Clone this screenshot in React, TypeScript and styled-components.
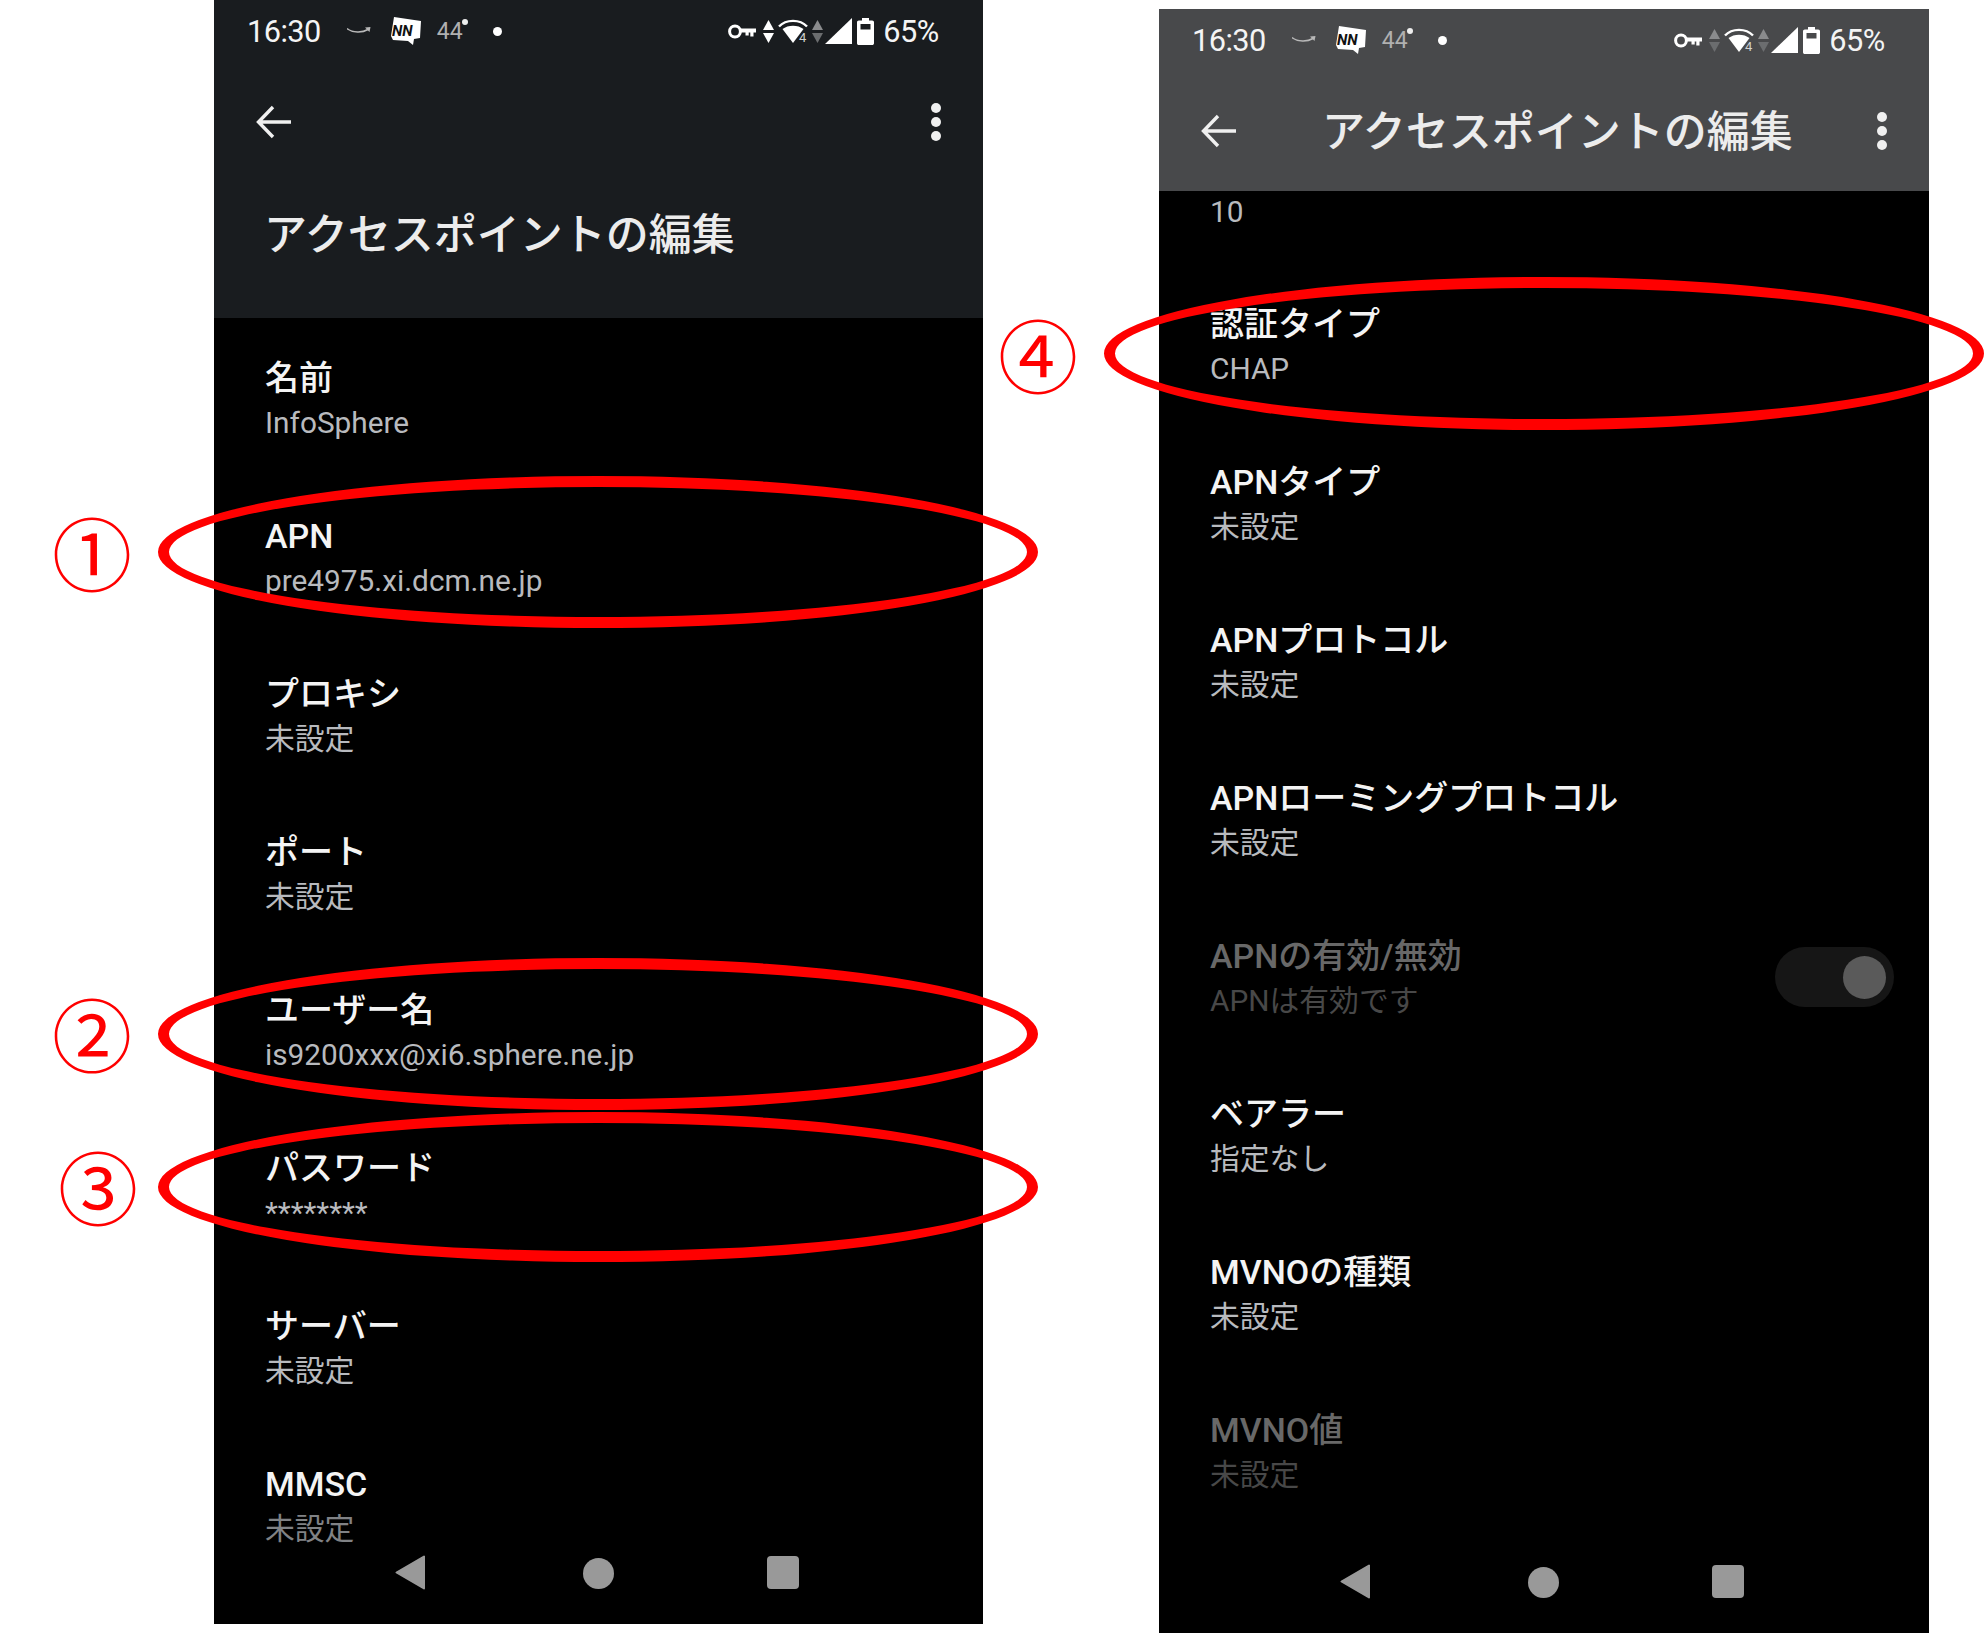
import React from 'react';
import styled, { createGlobalStyle } from 'styled-components';

const FONT = `Roboto, "Noto Sans CJK JP", sans-serif`;
const WHITE = '#f4f4f4';

type Item = { title: string; sub: string; disabled?: boolean; faded?: boolean };

const leftItems: Item[] = [
  { title: '名前', sub: 'InfoSphere' },
  { title: 'APN', sub: 'pre4975.xi.dcm.ne.jp' },
  { title: 'プロキシ', sub: '未設定' },
  { title: 'ポート', sub: '未設定' },
  { title: 'ユーザー名', sub: 'is9200xxx@xi6.sphere.ne.jp' },
  { title: 'パスワード', sub: '********' },
  { title: 'サーバー', sub: '未設定' },
  { title: 'MMSC', sub: '未設定', faded: true },
];

const rightItems: Item[] = [
  { title: '認証タイプ', sub: 'CHAP' },
  { title: 'APNタイプ', sub: '未設定' },
  { title: 'APNプロトコル', sub: '未設定' },
  { title: 'APNローミングプロトコル', sub: '未設定' },
  { title: 'APNの有効/無効', sub: 'APNは有効です', disabled: true },
  { title: 'ベアラー', sub: '指定なし' },
  { title: 'MVNOの種類', sub: '未設定' },
  { title: 'MVNO値', sub: '未設定', disabled: true },
];

function KeyIcon() {
  return (
    <svg width="28" height="15" viewBox="0 0 28 15">
      <circle cx="7" cy="7.5" r="5.4" fill="none" stroke="#fff" strokeWidth="3" />
      <path d="M12 4.4h16v4.2h-2.5v4h-3.2v-4h-1.6v3h-3.2v-3H12z" fill="#fff" />
    </svg>
  );
}

function UpDown({ dim }: { dim?: boolean }) {
  const fill = dim ? '#6b6d6f' : '#fff';
  return (
    <svg width="11" height="23" viewBox="0 0 11 23">
      <path d="M5.5 0L11 10H0z" fill={dim ? '#8a8b8d' : fill} />
      <path d="M5.5 23L0 13h11z" fill={fill} />
    </svg>
  );
}

function WifiIcon() {
  return (
    <svg width="30" height="26" viewBox="0 0 30 26">
      <path d="M1 8.5C8 1 22 1 29 8.5" fill="none" stroke="#fff" strokeWidth="2.4" />
      <path d="M4.5 11C10 6.5 20 6.5 25.5 11L15 25z" fill="#fff" />
      <text x="21" y="24" fontSize="13" fontFamily="Roboto, sans-serif" fill="#d0d0d0">
        4
      </text>
    </svg>
  );
}

function SignalIcon() {
  return (
    <svg width="27" height="26" viewBox="0 0 27 26">
      <path d="M27 0v26H0z" fill="#fff" />
    </svg>
  );
}

function BatteryIcon() {
  return (
    <svg width="17" height="27" viewBox="0 0 17 27">
      <path
        d="M5 0h7v2.5h3.2c1 0 1.8.8 1.8 1.8v20.9c0 1-.8 1.8-1.8 1.8H1.8c-1 0-1.8-.8-1.8-1.8V4.3c0-1 .8-1.8 1.8-1.8H5zM3.5 6v5.5h10V6z"
        fill="#fff"
        fillRule="evenodd"
      />
    </svg>
  );
}

function SmileIcon() {
  return (
    <svg width="24" height="10" viewBox="0 0 24 10">
      <path d="M0 2.5C6 7 15 7 21 3.5" fill="none" stroke="#b9b9b9" strokeWidth="1.5" />
      <path d="M18 1.5L23.5 1 22.5 6z" fill="#b9b9b9" />
    </svg>
  );
}

function NewsIcon() {
  return (
    <svg width="30" height="28" viewBox="0 0 30 28">
      <path d="M3 0l27 4-1 17-6 1-1 6-5-4-15-1-2-4z" fill="#fff" />
      <text
        x="1"
        y="19"
        fontSize="15"
        fontWeight="700"
        fontStyle="italic"
        fontFamily="Roboto, sans-serif"
        fill="#111"
      >
        NN
      </text>
    </svg>
  );
}

function BackArrow() {
  return (
    <svg width="36" height="34" viewBox="0 0 36 34">
      <path
        d="M35 17H3M17 2L2.5 17 17 32"
        fill="none"
        stroke="#f0f0f0"
        strokeWidth="3.4"
      />
    </svg>
  );
}

function StatusBar({ dimArrows }: { dimArrows?: boolean }) {
  return (
    <StatusRow>
      <Clock>16:30</Clock>
      <SmileIcon />
      <NewsIcon />
      <Temperature>44</Temperature>
      <StatusDot />
      <StatusRight>
        <KeyIcon />
        <UpDown dim={dimArrows} />
        <WifiIcon />
        <UpDown dim />
        <SignalIcon />
        <BatteryIcon />
        <Percent>65%</Percent>
      </StatusRight>
    </StatusRow>
  );
}

function Row({ item, toggle }: { item: Item; toggle?: boolean }) {
  return (
    <RowBox>
      <div>
        <RowTitle $disabled={item.disabled}>{item.title}</RowTitle>
        <RowSub $disabled={item.disabled} $faded={item.faded}>
          {item.sub}
        </RowSub>
      </div>
      {toggle && (
        <Track>
          <Thumb />
        </Track>
      )}
    </RowBox>
  );
}

function NavBar() {
  return (
    <Nav>
      <svg width="30" height="35" viewBox="0 0 30 35">
        <path d="M29 1.5v32L1.5 17.5z" fill="#999" stroke="#999" strokeWidth="2" strokeLinejoin="round" />
      </svg>
      <NavCircle />
      <NavSquare />
    </Nav>
  );
}

const ovals = [
  { left: 158, top: 476, width: 880, height: 152 },
  { left: 158, top: 958, width: 880, height: 152 },
  { left: 158, top: 1112, width: 880, height: 150 },
  { left: 1104, top: 277, width: 880, height: 153 },
];

const marks = [
  { left: 52, top: 497, text: '①' },
  { left: 52, top: 978, text: '②' },
  { left: 58, top: 1131, text: '③' },
  { left: 998, top: 299, text: '④' },
];

export default function App() {
  return (
    <>
      <GlobalStyle />
      <Page>
        <Phone $width={769} $top={0}>
          <Header $bg="#191c1f">
            <StatusBar />
            <Toolbar $height={120}>
              <BackArrow />
              <Dots>
                <Dot />
                <Dot />
                <Dot />
              </Dots>
            </Toolbar>
            <LargeTitle>アクセスポイントの編集</LargeTitle>
          </Header>
          <List>
            {leftItems.map((item) => (
              <Row key={item.title} item={item} />
            ))}
          </List>
          <NavBar />
        </Phone>

        <Phone $width={770} $top={9}>
          <Header $bg="#48494b">
            <StatusBar dimArrows />
            <Toolbar $height={120}>
              <BackArrow />
              <ToolbarTitle>アクセスポイントの編集</ToolbarTitle>
              <Dots>
                <Dot />
                <Dot />
                <Dot />
              </Dots>
            </Toolbar>
          </Header>
          <List>
            <ClippedRow>
              <RowSub>10</RowSub>
            </ClippedRow>
            {rightItems.map((item) => (
              <Row key={item.title} item={item} toggle={item.title === 'APNの有効/無効'} />
            ))}
          </List>
          <NavBar />
        </Phone>

        {ovals.map((o) => (
          <Oval key={o.top} $left={o.left} $top={o.top} $width={o.width} $height={o.height} />
        ))}
        {marks.map((m) => (
          <Mark key={m.text} $left={m.left} $top={m.top}>
            {m.text}
          </Mark>
        ))}
      </Page>
    </>
  );
}

const GlobalStyle = createGlobalStyle`
  html, body {
    margin: 0;
    padding: 0;
    background: #fff;
    overflow: hidden;
  }
`;

const Page = styled.div`
  position: relative;
  width: 1984px;
  height: 1633px;
  overflow: hidden;
  display: flex;
  align-items: flex-start;
  gap: 176px;
  padding-left: 214px;
  box-sizing: border-box;
  font-family: ${FONT};
`;

const Phone = styled.div<{ $width: number; $top: number }>`
  width: ${(p) => p.$width}px;
  height: 1624px;
  margin-top: ${(p) => p.$top}px;
  display: flex;
  flex-direction: column;
  flex: none;
  background: #000;
`;

const Header = styled.div<{ $bg: string }>`
  flex: none;
  background: ${(p) => p.$bg};
`;

const StatusRow = styled.div`
  height: 62px;
  display: flex;
  align-items: center;
  padding: 0 44px 0 33px;
  color: #fff;

  & > svg:nth-of-type(1) {
    margin-left: 23px;
  }

  & > svg:nth-of-type(2) {
    margin-left: 20px;
  }
`;

const Clock = styled.span`
  font-size: 32px;
  letter-spacing: -0.6px;
  transform: scaleX(0.96);
  transform-origin: left center;
  color: #f4f4f4;
`;

const Temperature = styled.span`
  position: relative;
  margin-left: 16px;
  font-size: 23px;
  color: #b0b0b0;

  &::after {
    content: '';
    position: absolute;
    right: -5px;
    top: 1px;
    width: 6px;
    height: 6px;
    border-radius: 50%;
    background: #eee;
  }
`;

const StatusDot = styled.span`
  width: 9px;
  height: 9px;
  margin-left: 30px;
  border-radius: 50%;
  background: #fff;
`;

const StatusRight = styled.div`
  margin-left: auto;
  display: flex;
  align-items: center;
  gap: 4px;

  & > svg:first-child {
    margin-right: 3px;
  }

  & > svg:nth-child(5) {
    margin-left: -2px;
  }

  & > svg:nth-child(6) {
    margin-left: 1px;
  }
`;

const Percent = styled.span`
  margin-left: 3px;
  font-size: 32px;
  letter-spacing: -0.6px;
  transform: scaleX(0.96);
  transform-origin: right center;
  color: #f4f4f4;
`;

const Toolbar = styled.div<{ $height: number }>`
  height: ${(p) => p.$height}px;
  display: flex;
  align-items: center;
  padding: 0 42px 0 42px;
`;

const ToolbarTitle = styled.div`
  margin: 0 0 7px 85px;
  font-size: 43px;
  font-weight: 500;
  color: #ececec;
  white-space: nowrap;
`;

const Dots = styled.div`
  margin-left: auto;
  display: flex;
  flex-direction: column;
  gap: 4px;
`;

const Dot = styled.span`
  width: 10px;
  height: 10px;
  border-radius: 50%;
  background: #f0f0f0;
`;

const LargeTitle = styled.div`
  height: 106px;
  padding: 0 0 30px 50px;
  font-size: 43px;
  font-weight: 500;
  line-height: 106px;
  color: #ececec;
  white-space: nowrap;
`;

const List = styled.div`
  flex: 1;
  min-height: 0;
  overflow: hidden;
`;

const ClippedRow = styled.div`
  height: 73px;
  padding-left: 51px;
  margin-top: -1px;
  margin-bottom: 1px;
`;

const RowBox = styled.div`
  height: 158px;
  box-sizing: border-box;
  padding: 38px 35px 0 51px;
  display: flex;
  justify-content: space-between;
  align-items: flex-start;
`;

const RowTitle = styled.div<{ $disabled?: boolean }>`
  font-size: 34px;
  font-weight: 500;
  line-height: 45px;
  color: ${(p) => (p.$disabled ? '#686868' : WHITE)};
  white-space: nowrap;
`;

const RowSub = styled.div<{ $disabled?: boolean; $faded?: boolean }>`
  font-size: 29.8px;
  line-height: 44px;
  color: ${(p) => (p.$disabled ? '#484848' : p.$faded ? '#808285' : '#b8babe')};
  white-space: nowrap;
`;

const Track = styled.div`
  width: 119px;
  height: 60px;
  margin-top: 13px;
  padding-right: 8px;
  box-sizing: border-box;
  border-radius: 30px;
  background: #161616;
  display: flex;
  align-items: center;
  justify-content: flex-end;
`;

const Thumb = styled.span`
  width: 43px;
  height: 43px;
  border-radius: 50%;
  background: #5a5a5a;
`;

const Nav = styled.div`
  flex: none;
  height: 76px;
  box-sizing: border-box;
  padding: 7px 0 0 181px;
  display: grid;
  grid-template-columns: 188px 184px 32px;
  align-items: start;
`;

const NavCircle = styled.span`
  width: 31px;
  height: 31px;
  margin-top: 3px;
  border-radius: 50%;
  background: #999;
`;

const NavSquare = styled.span`
  width: 32px;
  height: 33px;
  margin-top: 1px;
  border-radius: 4px;
  background: #999;
`;

const Oval = styled.div<{ $left: number; $top: number; $width: number; $height: number }>`
  position: absolute;
  left: ${(p) => p.$left}px;
  top: ${(p) => p.$top}px;
  width: ${(p) => p.$width}px;
  height: ${(p) => p.$height}px;
  box-sizing: border-box;
  border: 11px solid #f00;
  border-radius: 50%;
`;

const Mark = styled.div<{ $left: number; $top: number }>`
  position: absolute;
  left: ${(p) => p.$left}px;
  top: ${(p) => p.$top}px;
  font-family: "Noto Sans CJK JP", sans-serif;
  font-size: 80px;
  line-height: 106px;
  color: #f00;
`;
